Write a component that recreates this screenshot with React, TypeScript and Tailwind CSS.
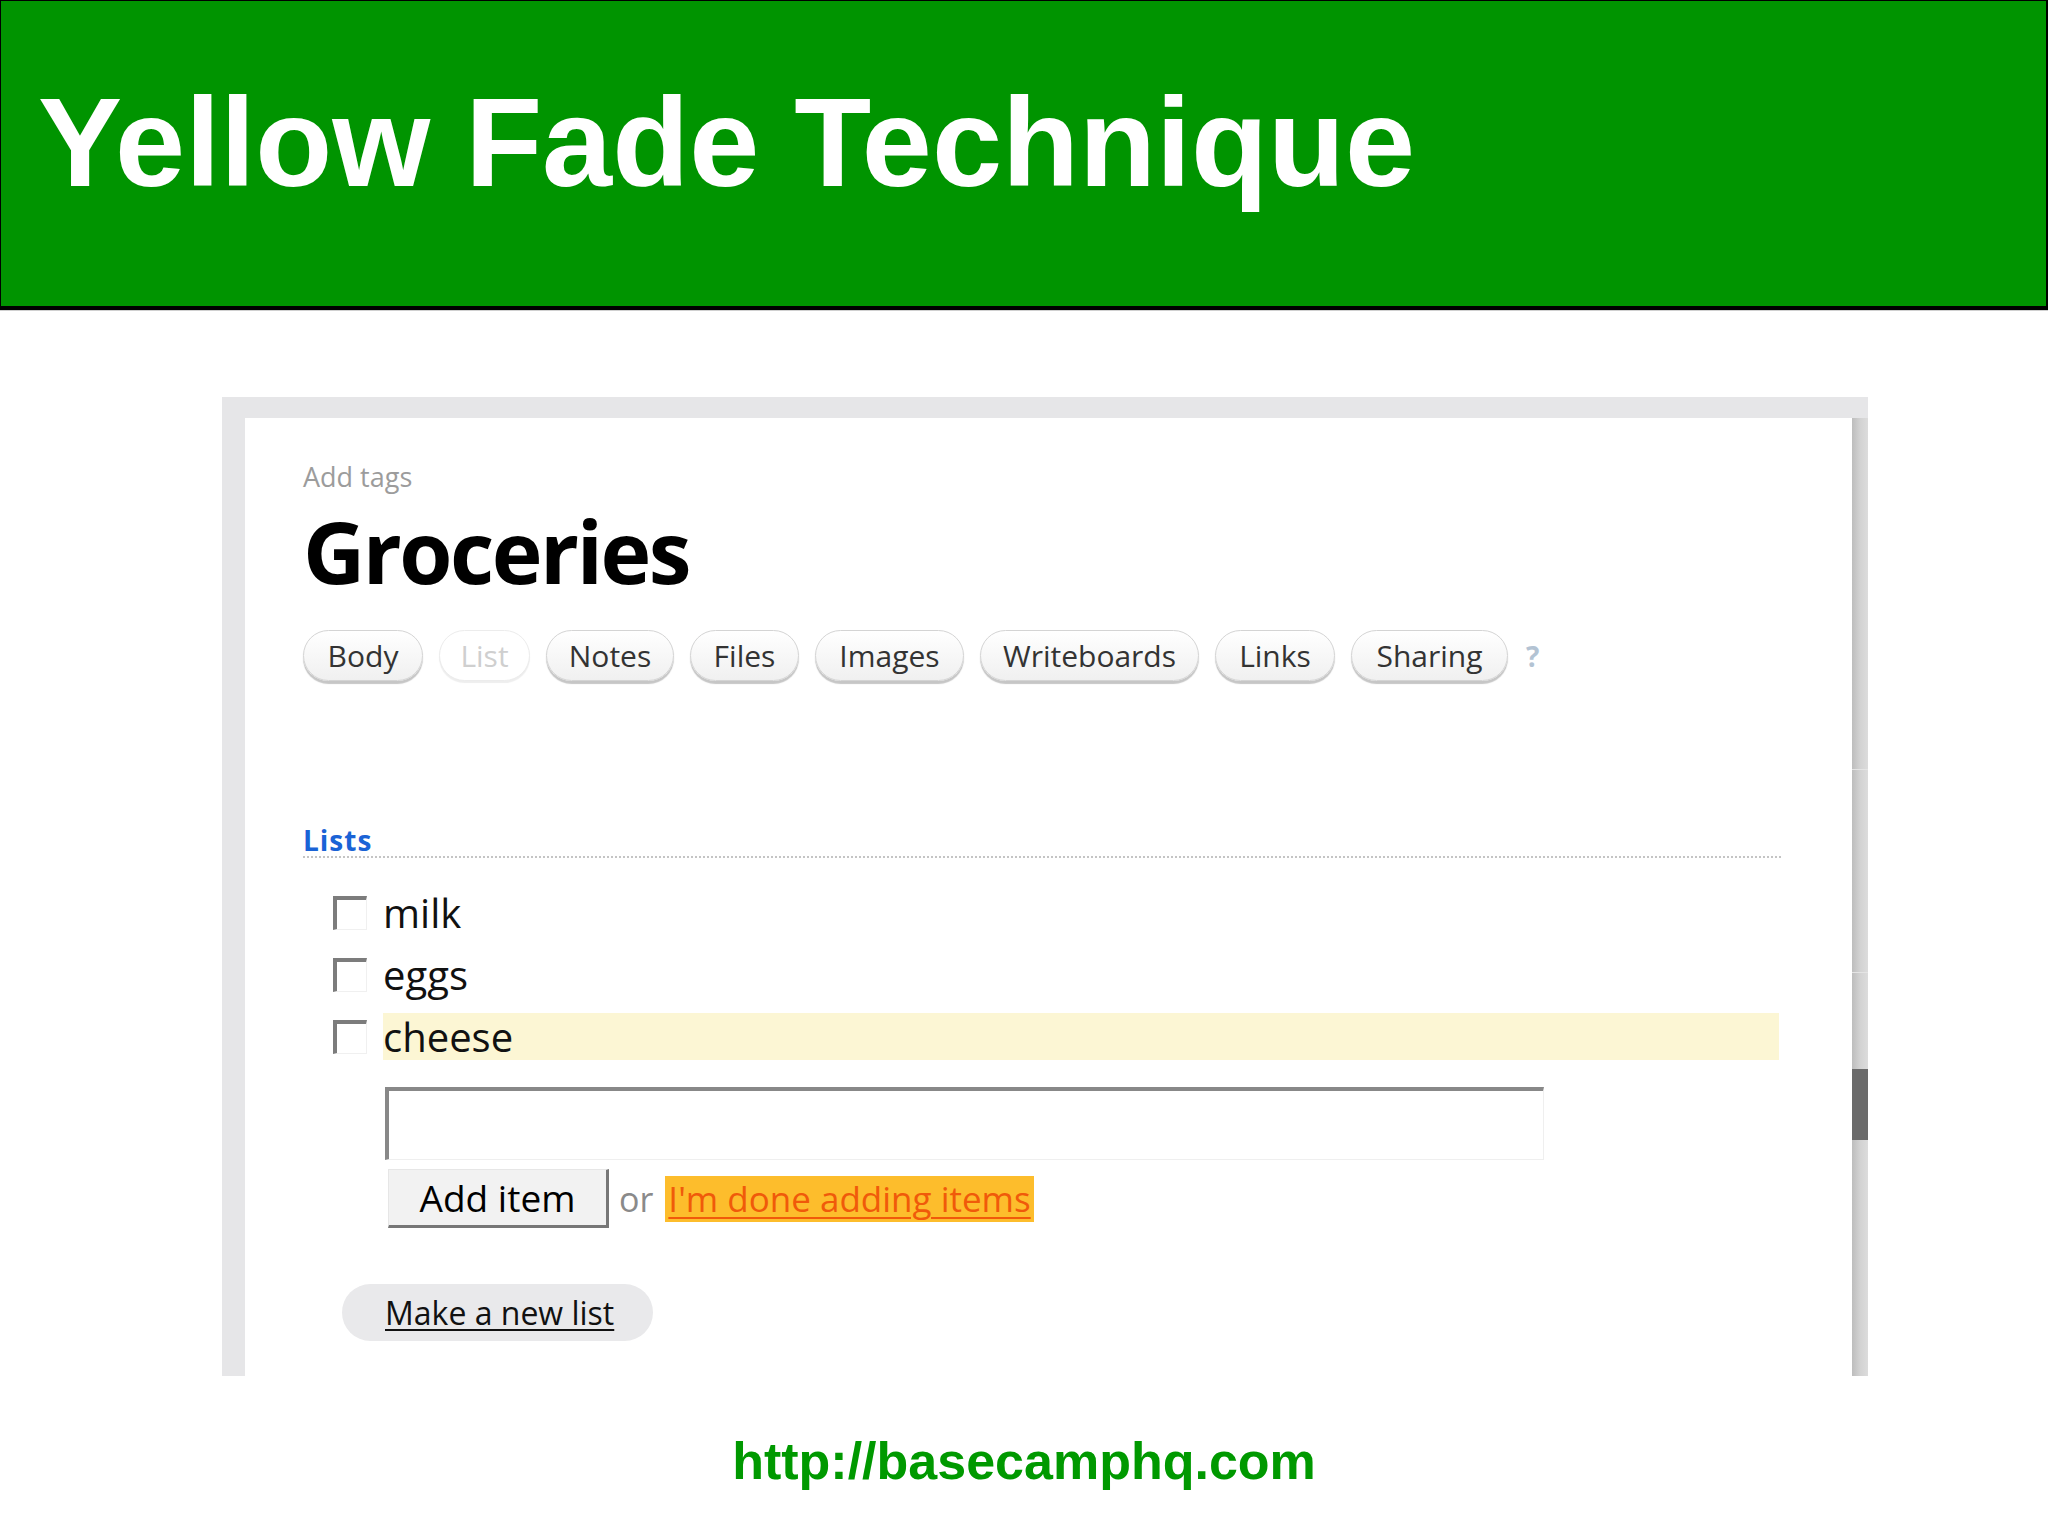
import React from "react";

const tabs: { label: string; w: string; faded?: boolean }[] = [
  { label: "Body", w: "w-[120px]" },
  { label: "List", w: "w-[91px]", faded: true },
  { label: "Notes", w: "w-[128px]" },
  { label: "Files", w: "w-[109px]" },
  { label: "Images", w: "w-[149px]" },
  { label: "Writeboards", w: "w-[219px]" },
  { label: "Links", w: "w-[120px]" },
  { label: "Sharing", w: "w-[157px]" },
];

function Checkbox() {
  return (
    <div className="w-[34px] h-[34px] shrink-0 bg-white border-t-[4px] border-l-[4px] border-r border-b border-t-[#7c7c7c] border-l-[#7c7c7c] border-r-[#f0f0f0] border-b-[#f0f0f0]" />
  );
}

function Row({ label, hl }: { label: string; hl?: boolean }) {
  return (
    <div className="flex items-center h-[47px] w-[1446px]">
      <Checkbox />
      <div
        className={
          "ml-[16px] flex-1 h-[47px] leading-[47px] text-[40px] text-[#111] " +
          (hl ? "bg-[#fcf6d4]" : "")
        }
      >
        {label}
      </div>
    </div>
  );
}

export default function App() {
  return (
    <div className="w-[2048px] h-[1536px] bg-white overflow-hidden font-['Open_Sans',sans-serif]">
      {/* Header */}
      <div className="h-[310px] bg-[#009400] border-t border-l border-r-2 border-b-[4px] border-black pl-[37px] pt-[79px]">
        <div className="font-['Liberation_Sans',Arial,sans-serif] font-bold text-white text-[126px] leading-[126px]">
          Yellow Fade Technique
        </div>
      </div>
      <div className="h-px bg-[#d0d0d0]" />

      {/* Screenshot frame */}
      <div className="mt-[86px] ml-[222px] w-[1646px] h-[979px] bg-[#e6e6e8] pt-[21px] pl-[23px] flex">
        <div className="flex-1 h-full bg-white pl-[58px] pt-[45px]">
          <div className="h-[28px] leading-[28px] text-[27px] text-[#9c9c9c]">Add tags</div>
          <div className="mt-[5px] h-[110px] leading-[110px] text-[86px] font-bold text-black tracking-[-2.5px]">
            Groceries
          </div>

          {/* Tabs */}
          <div className="mt-[24px] h-[54px] flex items-start gap-[16px]">
            {tabs.map((t) => (
              <div
                key={t.label}
                className={
                  t.w +
                  " h-[51px] rounded-full flex items-center justify-center text-[30px] leading-none " +
                  (t.faded
                    ? "bg-white border border-[#ececec] text-[#cfcfcf] shadow-[0_2px_1px_#eeeeee]"
                    : "bg-gradient-to-b from-white to-[#f0f0f0] border border-[#d4d4d4] text-[#333333] shadow-[0_3px_1px_#c6c6c6]")
                }
              >
                {t.label}
              </div>
            ))}
            <div className="ml-[2px] mt-[12px] text-[28px] leading-none font-bold text-[#b3c3d3]">?</div>
          </div>

          {/* Lists heading */}
          <div className="mt-[141px] w-[1478px] border-b-2 border-dotted border-[#c4c4c4] pb-[1px]">
            <div className="h-[30px] leading-[30px] text-[28px] font-bold text-[#1a63d6] tracking-[1px]">Lists</div>
          </div>

          {/* Items */}
          <div className="mt-[31px] ml-[30px] flex flex-col gap-[15px]">
            <Row label="milk" />
            <Row label="eggs" />
            <Row label="cheese" hl />
          </div>

          {/* Input */}
          <div className="mt-[27px] ml-[82px] w-[1159px] h-[73px] bg-white border-t-[4px] border-l-[4px] border-r border-b border-t-[#888888] border-l-[#888888] border-r-[#efefef] border-b-[#efefef]" />

          {/* Buttons */}
          <div className="mt-[9px] ml-[85px] flex items-center">
            <div className="w-[221px] h-[59px] bg-[#f2f2f2] border-t border-l border-r-[3px] border-b-[3px] border-t-[#e6e6e6] border-l-[#e6e6e6] border-r-[#777777] border-b-[#777777] flex items-center justify-center text-[37px] leading-none text-black">
              Add item
            </div>
            <div className="ml-[10px] text-[34px] leading-none text-[#8a8a8a]">or</div>
            <div className="ml-[12px] h-[46px] px-[3px] bg-[#fdbd2c] flex items-center text-[35px] leading-none text-[#f05a0a] underline decoration-2 underline-offset-[5px]">
              I'm done adding items
            </div>
          </div>

          {/* Make a new list */}
          <div className="mt-[56px] ml-[39px] w-[311px] h-[57px] rounded-full bg-[#e9e9eb] pl-[43px] flex items-center">
            <span className="text-[32px] leading-none text-[#111] underline decoration-2 underline-offset-[4px]">
              Make a new list
            </span>
          </div>
        </div>

        {/* Scrollbar */}
        <div className="w-[16px] h-full flex flex-col bg-gradient-to-r from-[#bdbdbd] via-[#d2d2d2] to-[#dcdcdc]">
          <div className="h-[352px] border-b border-[#e4e4e4]" />
          <div className="h-[203px] border-b border-[#e4e4e4]" />
          <div className="h-[96px]" />
          <div className="h-[71px] bg-[#6b6b6b]" />
          <div className="flex-1" />
        </div>
      </div>

      {/* Footer */}
      <div className="mt-[55px] text-center font-['Liberation_Sans',Arial,sans-serif] font-bold text-[52px] leading-[60px] text-[#009900]">
        http://basecamphq.com
      </div>
    </div>
  );
}
